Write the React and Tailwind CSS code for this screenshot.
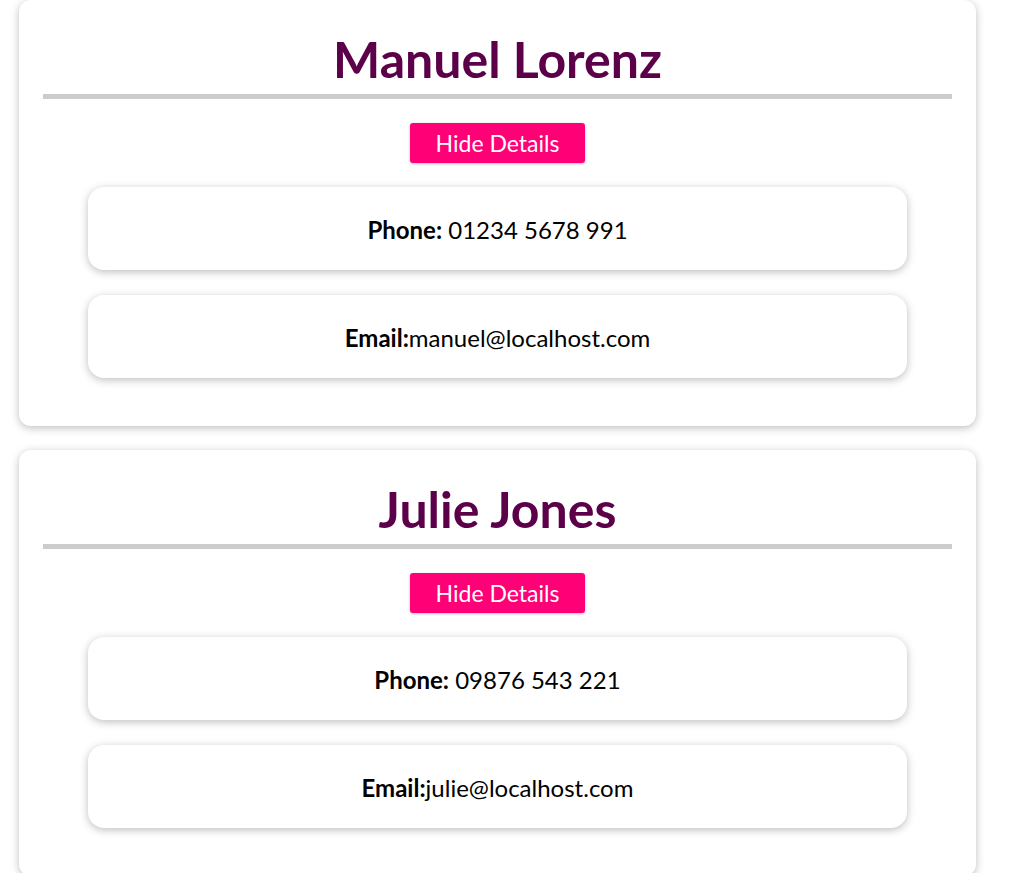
import React from "react";

const users = [
  { name: "Manuel Lorenz", phone: "01234 5678 991", email: "manuel@localhost.com" },
  { name: "Julie Jones", phone: "09876 543 221", email: "julie@localhost.com" },
];

function Detail({ children }) {
  return (
    <div className="mx-auto flex h-[83px] w-[90%] items-center justify-center rounded-2xl bg-white pt-[2px] text-[24px] text-black shadow-[0_2px_8px_rgba(0,0,0,0.26)]">
      <p>{children}</p>
    </div>
  );
}

function UserCard({ user }) {
  return (
    <li className="list-none rounded-xl bg-white px-6 pt-[30px] pb-[48px] shadow-[0_2px_8px_rgba(0,0,0,0.26)]">
      <h2 className="border-b-[5px] border-[#cccccc] pb-[6px] text-center text-[50px] leading-[58px] font-bold text-[#5b0049]">
        {user.name}
      </h2>
      <div className="mt-[24px] flex justify-center">
        <button className="h-10 w-[175px] rounded-[3px] bg-[#ff0077] text-[23px] text-white shadow-[0_1px_3px_rgba(0,0,0,0.26)]">
          Hide Details
        </button>
      </div>
      <div className="mt-6 flex flex-col gap-[25px]">
        <Detail>
          <strong>Phone:</strong> {user.phone}
        </Detail>
        <Detail>
          <strong>Email:</strong>
          {user.email}
        </Detail>
      </div>
    </li>
  );
}

export default function App() {
  return (
    <div
      className="min-h-[873px] bg-white"
      style={{ fontFamily: "Lato, 'Noto Sans', sans-serif" }}
    >
      <ul className="ml-[19px] flex w-[957px] flex-col gap-6">
        {users.map((u) => (
          <UserCard key={u.name} user={u} />
        ))}
      </ul>
    </div>
  );
}
